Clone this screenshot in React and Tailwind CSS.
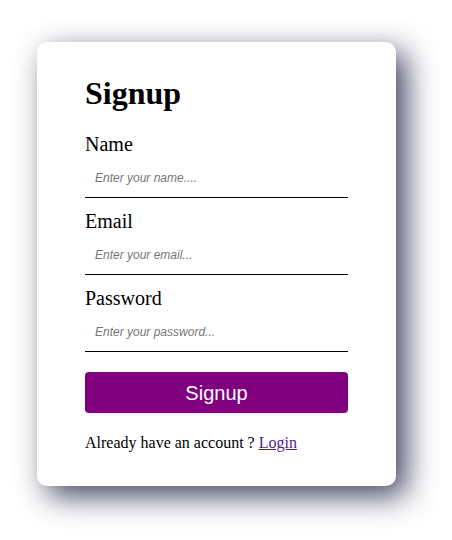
import React from "react";

function Field({ label, placeholder, type = "text" }) {
  return (
    <div className="flex flex-col">
      <label className="text-[20px] leading-[23px]">{label}</label>
      <input
        type={type}
        placeholder={placeholder}
        className="h-[42px] pt-[3px] px-[10px] border-b border-black outline-none text-[12px] italic placeholder:text-[#757575] font-['Liberation_Sans',Arial,sans-serif]"
      />
    </div>
  );
}

export default function App() {
  return (
    <div className="min-h-[540px] w-[452px] bg-white pl-[37px] pt-[42px] font-['Liberation_Serif','Times_New_Roman',serif] text-black">
      <div className="w-[359px] rounded-[10px] bg-white px-[48px] pt-[33px] pb-[34px] shadow-[10px_10px_30px_rgba(20,20,60,0.8)]">
        <h1 className="text-[32px] font-bold leading-[37px] mb-[21px]">Signup</h1>
        <div className="flex flex-col gap-[12px]">
          <Field label="Name" placeholder="Enter your name...." />
          <Field label="Email" placeholder="Enter your email..." type="email" />
          <Field label="Password" placeholder="Enter your password..." type="password" />
        </div>
        <button className="mt-[20px] h-[41px] w-full rounded-[4px] bg-[#800080] text-white text-[20px] font-['Liberation_Sans',Arial,sans-serif]">
          Signup
        </button>
        <p className="mt-[21px] text-[16px] leading-[18px]">
          Already have an account ?{" "}
          <a href="#" className="text-[#551a8b] underline">Login</a>
        </p>
      </div>
    </div>
  );
}
